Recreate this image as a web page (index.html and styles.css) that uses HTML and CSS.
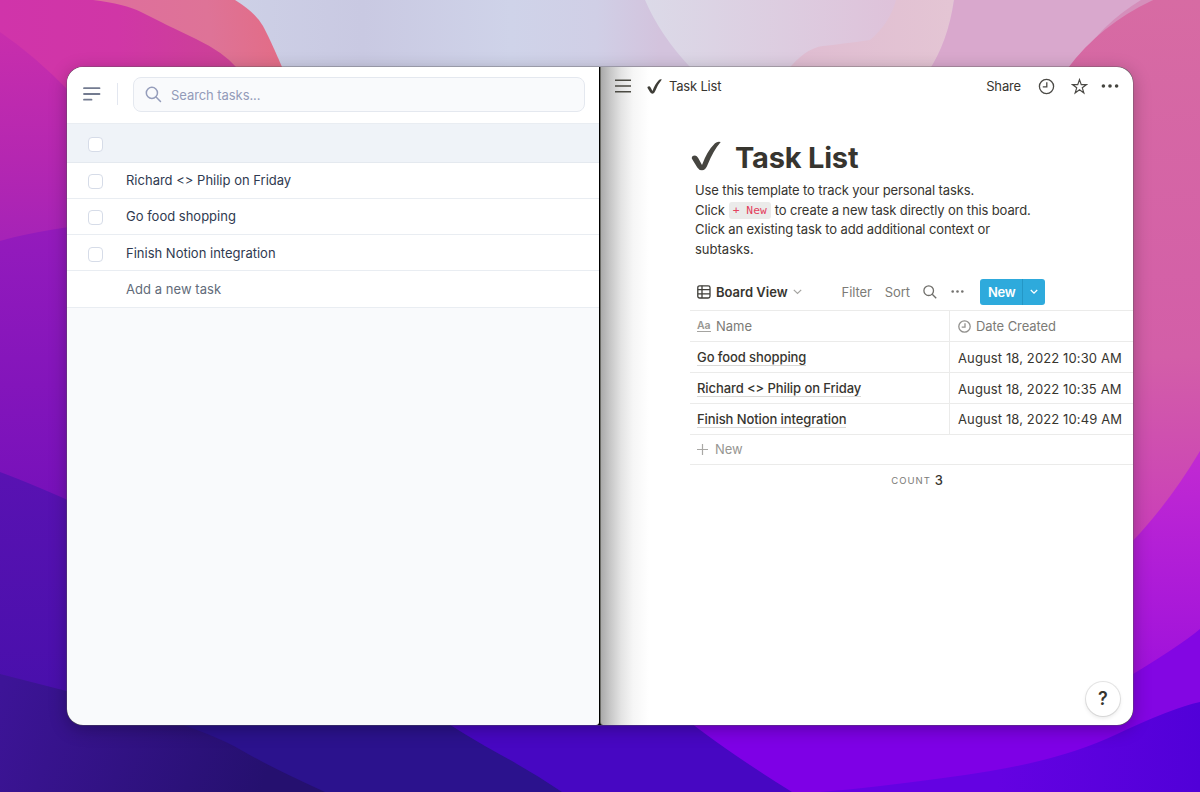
FILE: index.html
```
<!DOCTYPE html>
<html lang="en">
<head>
<meta charset="utf-8">
<title>Task List</title>
<link rel="stylesheet" href="styles.css">
</head>
<body>
<svg class="wallpaper" viewBox="0 0 1200 792" preserveAspectRatio="none" aria-hidden="true">
  <defs>
    <linearGradient id="gMagenta" x1="0" y1="0" x2="0" y2="1"><stop offset="0" stop-color="#c82eac"/><stop offset=".55" stop-color="#b527b1"/><stop offset="1" stop-color="#a222b8"/></linearGradient>
    <linearGradient id="gPink" x1="0" y1="0" x2="1" y2="0"><stop offset="0" stop-color="#d034aa"/><stop offset=".5" stop-color="#d036a6"/><stop offset="1" stop-color="#cb4295"/></linearGradient>
    <linearGradient id="gCoral" gradientUnits="userSpaceOnUse" x1="120" y1="40" x2="270" y2="20"><stop offset="0" stop-color="#de6f9c"/><stop offset=".6" stop-color="#de7397"/><stop offset="1" stop-color="#e26d88"/></linearGradient>
    <linearGradient id="gViolet" x1="0" y1="0" x2="0" y2="1"><stop offset="0" stop-color="#951bbc"/><stop offset="1" stop-color="#7410ba"/></linearGradient>
    <linearGradient id="gIndigo" x1="0" y1="0" x2="0" y2="1"><stop offset="0" stop-color="#5912b2"/><stop offset="1" stop-color="#470fab"/></linearGradient>
    <linearGradient id="gNavy" gradientUnits="userSpaceOnUse" x1="0" y1="690" x2="260" y2="792"><stop offset="0" stop-color="#3d1497"/><stop offset="1" stop-color="#25106f"/></linearGradient>
    <linearGradient id="gSky" gradientUnits="userSpaceOnUse" x1="235" y1="0" x2="660" y2="0"><stop offset="0" stop-color="#cdd0e6"/><stop offset=".3" stop-color="#c9c9e2"/><stop offset=".65" stop-color="#cfd3e9"/><stop offset=".85" stop-color="#d0cfe6"/><stop offset="1" stop-color="#d3c3dd"/></linearGradient>
    <linearGradient id="gHaze" gradientUnits="userSpaceOnUse" x1="640" y1="0" x2="930" y2="0"><stop offset="0" stop-color="#dbdae8"/><stop offset="1" stop-color="#dfbfd8"/></linearGradient>
    <linearGradient id="gRose" gradientUnits="userSpaceOnUse" x1="790" y1="0" x2="952" y2="0"><stop offset="0" stop-color="#dfbcd1"/><stop offset="1" stop-color="#e4c5d4"/></linearGradient>
    <linearGradient id="gRight" gradientUnits="userSpaceOnUse" x1="1150" y1="0" x2="1160" y2="550"><stop offset="0" stop-color="#d76ba3"/><stop offset=".65" stop-color="#d35ea8"/><stop offset="1" stop-color="#c93cba"/></linearGradient>
    <linearGradient id="gOrchid" x1="0" y1="0" x2="0" y2="1"><stop offset="0" stop-color="#c22ad2"/><stop offset="1" stop-color="#9d10dc"/></linearGradient>
    <linearGradient id="gBlue" gradientUnits="userSpaceOnUse" x1="1000" y1="760" x2="1200" y2="780"><stop offset="0" stop-color="#6402e2"/><stop offset="1" stop-color="#5100d8"/></linearGradient>
  </defs>
  <rect width="1200" height="792" fill="url(#gSky)"/>
  <path fill="url(#gCoral)" d="M0 0H235Q256 13 263 26T282 67V90H0Z"/>
  <path fill="url(#gPink)" d="M0 0H93Q125 4 141 12T163 23T196 39T236 67V260H0Z"/>
  <path fill="url(#gMagenta)" d="M0 32Q35 56 70 92V260H0Z"/>
  <path fill="url(#gViolet)" d="M0 241Q30 232 90 224V520H0Z"/>
  <path fill="url(#gIndigo)" d="M0 472Q35 485 90 510V720H0Z"/>
  <path fill="url(#gNavy)" d="M0 674L90 697V710H400V792H0Z"/>
  <path fill="#2b128d" d="M150 714Q214 734 241 750T325 792H620V710Z"/>
  <path fill="#4707c2" d="M430 712Q468 737 501 755T562 792H820V710Z"/>
  <path fill="#7e00e6" d="M675 710Q715 744 792 792H1200V640H1080V710Z"/>
  <path fill="url(#gHaze)" d="M645 0Q660 35 690 67V90H952V0Z"/>
  <path fill="url(#gRose)" d="M786 72Q805 48 823 46T870 40Q890 23 896 0H954Q948 42 928 72Z"/>
  <path fill="#d9a8cd" d="M954 0Q948 42 928 72H1080L1160 0Z"/>
  <path fill="#d58fbb" d="M1141 0H1153L1080 60Q1100 25 1141 0Z"/>
  <path fill="url(#gRight)" d="M1153 0Q1100 25 1068 68V90H1120V570L1200 500V0Z"/>
  <path fill="url(#gOrchid)" d="M1200 451Q1165 510 1120 554V690H1200Z"/>
  <path fill="#8306e3" d="M1200 629Q1180 646 1120 682V720H1200Z"/>
  <path fill="url(#gBlue)" d="M1200 702Q1172 708 1115 735T965 775T820 792H1200Z"/>
</svg>

<main class="window">
  <section class="tasks">
    <header class="tasks-head">
      <svg class="menu-icon" width="18" height="14" viewBox="0 0 18 14" fill="none" stroke="#737b90" stroke-width="1.8" stroke-linecap="round"><path d="M1 1.2h15.500M1 7h15.500M1 12.700h7.500"/></svg>
      <span class="rule"></span>
      <div class="search">
        <svg width="17" height="17" viewBox="0 0 18 18" fill="none" stroke="#959dbb" stroke-width="1.6" stroke-linecap="round"><circle cx="7.300" cy="7.300" r="5.900"/><path d="M11.700 11.700l4.700 4.700"/></svg>
        <span>Search tasks...</span>
      </div>
    </header>
    <div class="select-all"><i class="box"></i></div>
    <div class="task"><i class="box"></i><span>Richard &lt;&gt; Philip on Friday</span></div>
    <div class="task"><i class="box"></i><span>Go food shopping</span></div>
    <div class="task"><i class="box"></i><span>Finish Notion integration</span></div>
    <div class="task add"><span>Add a new task</span></div>
  </section>

  <section class="doc">
    <header class="topbar">
      <svg width="16" height="14" viewBox="0 0 16 14" stroke="#4b4a43" stroke-width="1.500"><path d="M0 1.200h16M0 7h16M0 12.800h16"/></svg>
      <svg class="mini-check" width="15" height="15" viewBox="0 0 30 30" fill="#3e3d37"><path d="M.8 17.500Q.5 14.500 4 14.500Q6 14.600 7.200 17L11 24Q16 10 24 2.200Q26.500 0 29.700 1Q22 10 16.500 24Q14.500 29.300 11 29.300Q8 29.300 6.300 26.500Q3.500 22 .8 17.500Z"/></svg>
      <span class="crumb">Task List</span>
      <span class="share">Share</span>
      <svg class="clock" width="17" height="17" viewBox="0 0 17 17" fill="none" stroke="#4b4a46" stroke-width="1.300"><circle cx="8.500" cy="8.500" r="7.100"/><path d="M8.800 4.300v4.500H4.800"/></svg>
      <svg class="star" width="17" height="17" viewBox="0 0 17 17" fill="none" stroke="#4b4a46" stroke-width="1.200" stroke-linejoin="miter"><path d="M8.500 1.600l1.750 5h5.200l-4.150 3.200 1.550 5.200-4.350-3.150-4.350 3.150 1.550-5.200L1.550 6.600h5.200z"/></svg>
      <svg class="dots" width="18" height="4" viewBox="0 0 18 4" fill="#45443f"><circle cx="2.400" cy="2" r="1.800"/><circle cx="9" cy="2" r="1.800"/><circle cx="15.600" cy="2" r="1.800"/></svg>
    </header>

    <div class="page">
      <h1><svg width="30" height="30" viewBox="0 0 30 30" fill="#464540"><path d="M.8 17.500Q.5 14.500 4 14.500Q6 14.600 7.200 17L11 24Q16 10 24 2.200Q26.500 0 29.700 1Q22 10 16.500 24Q14.500 29.300 11 29.300Q8 29.300 6.300 26.500Q3.500 22 .8 17.500Z"/></svg><span>Task List</span></h1>
      <div class="intro">
        <div><span>Use this template to track your personal tasks.</span></div>
        <div><span>Click</span><code>+ New</code><span>to create a new task directly on this board.</span></div>
        <div><span>Click an existing task to add additional context or</span></div>
        <div><span>subtasks.</span></div>
      </div>

      <div class="toolbar">
        <svg width="14" height="14" viewBox="0 0 14 14" fill="none" stroke="#3f3e39" stroke-width="1.300"><rect x=".8" y=".8" width="12.200" height="12.200" rx="1.800"/><path d="M.8 4.700h12.200M.8 8.900h12.200M5 .8v12.200"/></svg>
        <span class="view">Board View</span>
        <svg class="chev" width="9" height="6" viewBox="0 0 9 6" fill="none" stroke="#a5a4a1" stroke-width="1.200"><path d="M.8.800l3.700 3.700L8.200.800"/></svg>
        <span class="filter">Filter</span>
        <span class="sort">Sort</span>
        <svg class="find" width="14" height="14" viewBox="0 0 14 14" fill="none" stroke="#6f6e6a" stroke-width="1.300"><circle cx="5.700" cy="5.700" r="4.800"/><path d="M9.200 9.200l4 4"/></svg>
        <svg class="more" width="13" height="3" viewBox="0 0 13 3" fill="#73726f"><circle cx="1.700" cy="1.500" r="1.300"/><circle cx="6.500" cy="1.500" r="1.300"/><circle cx="11.300" cy="1.500" r="1.300"/></svg>
        <div class="new"><span>New</span><b><svg width="8" height="6" viewBox="0 0 8 6" fill="none" stroke="#fff" stroke-width="1.300"><path d="M.8 1l3.200 3.200L7.200 1"/></svg></b></div>
      </div>

      <div class="table">
        <div class="row head">
          <div class="cell"><span class="aa">Aa</span><span class="name-label">Name</span></div>
          <div class="cell"><svg width="13" height="13" viewBox="0 0 13 13" fill="none" stroke="#92918e" stroke-width="1.300"><circle cx="6.500" cy="6.500" r="5.700"/><path d="M7 3.200v3.900H3.700"/></svg><span class="date-label">Date Created</span></div>
        </div>
        <div class="row"><div class="cell"><span class="name">Go food shopping</span></div><div class="cell"><span class="date">August 18, 2022 10:30 AM</span></div></div>
        <div class="row"><div class="cell"><span class="name">Richard &lt;&gt; Philip on Friday</span></div><div class="cell"><span class="date">August 18, 2022 10:35 AM</span></div></div>
        <div class="row"><div class="cell"><span class="name">Finish Notion integration</span></div><div class="cell"><span class="date">August 18, 2022 10:49 AM</span></div></div>
        <div class="row last"><svg width="11" height="11" viewBox="0 0 11 11" stroke="#a9a8a5" stroke-width="1.200"><path d="M5.500 0v11M0 5.500h11"/></svg><span>New</span></div>
      </div>
      <div class="count"><span>COUNT</span><em>3</em></div>
    </div>
    <div class="help">?</div>
  </section>
</main>
</body>
</html>
```

FILE: styles.css
```
* { box-sizing: border-box; }
body {
  margin: 0;
  width: 1200px;
  height: 792px;
  overflow: hidden;
  padding: 67px;
  font-family: Inter, "Liberation Sans", sans-serif;
  font-size: 13px;
  color: #37352f;
}
svg { display: block; flex: none; }
span { white-space: nowrap; }

.wallpaper { position: absolute; inset: 0; width: 1200px; height: 792px; z-index: -1; }

.window {
  display: flex;
  width: 1066px;
  height: 658px;
  border-radius: 16px;
  background: #000;
  box-shadow: 0 0 0 .5px rgba(90, 90, 90, .7), 0 4px 18px rgba(0, 0, 0, .28);
}

/* Task app */
.tasks {
  width: 532px;
  background: #f9fafc;
  border-radius: 16px 0 3px 16px;
  overflow: hidden;
  color: #2f3a50;
}
.tasks-head { display: flex; align-items: center; height: 57px; padding: 0 14px 2px 16px; background: #fff; border-bottom: 1px solid #e9edf2; }
.rule { width: 1px; height: 22px; margin: 0 15px 0 16px; background: #e3e7f0; }
.search {
  display: flex; align-items: center; gap: 9px; flex: 1; height: 35px; padding-left: 11px;
  background: #f9fafc; border: 1px solid #e4e8ef; border-radius: 8px; color: #939bb9;
}
.search span { padding-top: 1px; letter-spacing: -.07px; }
.select-all { display: flex; align-items: center; height: 38.500px; padding: 3px 21px 0; background: #eff3f8; border-bottom: 1px solid #e4e9ef; }
.box { display: block; flex: none; width: 15px; height: 15px; border: 1px solid #d6dce8; border-radius: 4px; background: #fff; }
.task { display: flex; align-items: center; height: 36.300px; padding: 0 21px; gap: 23px; background: #fff; border-bottom: 1px solid #e9edf2; }
.task .box { margin-top: 3px; }
.add { padding-left: 59px; color: #626b7a; letter-spacing: .05px; }

/* Document */
.doc {
  display: flex; flex-direction: column; position: relative; width: 533px; margin-left: 1px;
  border-radius: 0 16px 16px 3px; border-left: 1px solid #6b6b66;
  background: linear-gradient(90deg, #aaaaaa 0, #c9c9c9 10px, #e3e3e3 20px, #f6f6f6 32px, #fff 48px);
}
.topbar { display: flex; align-items: center; height: 38px; padding: 0 14px; }
.mini-check { margin-left: 16px; }
.crumb { margin-left: 7px; letter-spacing: -.2px; }
.share { margin-left: auto; letter-spacing: -.15px; }
.clock { margin-left: 17px; }
.star { margin-left: 16px; }
.dots { margin-left: 13px; }
.page { padding-left: 89px; }
h1 { display: flex; align-items: center; gap: 14px; height: 34px; margin: 35px 0 0 1px; font-size: 29px; font-weight: 700; letter-spacing: -.2px; }
h1 svg { margin-top: -2px; }
.intro { padding: 7px 0 0 5px; line-height: 19.600px; letter-spacing: -.12px; }
.intro div { display: flex; height: 19.600px; }
.intro div:nth-child(4) { letter-spacing: 0; }
code { margin: 1px 4px 0 4px; padding: 0 4px; height: 17px; font: 11.300px/18px "DejaVu Sans Mono", monospace; letter-spacing: 0; color: #e4415e; background: #ebebea; border-radius: 3px; }
.toolbar { display: flex; align-items: center; height: 27px; margin-top: 19px; padding-left: 7px; color: #7c7b77; }
.view { margin-left: 5px; font-weight: 600; color: #37352f; }
.chev { margin-left: 5px; }
.filter { margin-left: 40px; letter-spacing: -.1px; }
.sort { margin-left: 13px; letter-spacing: -.1px; }
.find { margin-left: 13px; }
.more { margin-left: 14px; }
.new { display: flex; height: 26px; margin-left: 16px; background: #2eaadc; border-radius: 3px; color: #fff; font-weight: 600; line-height: 26px; }
.new span { padding-left: 8px; width: 42px; letter-spacing: -.2px; }
.new b { display: flex; align-items: center; justify-content: center; width: 23px; border-left: 1px solid #2497c6; }
.table { margin-top: 5px; border-top: 1px solid #ebebea; }
.row { display: flex; height: 30.800px; border-bottom: 1px solid #ebebea; }
.cell { display: flex; align-items: center; width: 260px; padding-left: 7px; border-right: 1px solid #ebebea; }
.cell + .cell { flex: 1; border-right: 0; padding-left: 8px; }
.head { color: #7c7b77; height: 31px; }
.aa { width: 14px; margin-right: 5px; font-size: 10.500px; font-weight: 600; line-height: 11px; border-bottom: 1px solid #a5a4a1; color: #979692; letter-spacing: -.2px; }
.date-label { margin-left: 5px; letter-spacing: -.08px; }
.name { margin-top: 2px; font-weight: 500; line-height: 15px; border-bottom: 1px solid #d9d9d7; letter-spacing: -.09px; }
.date { padding-top: 1px; letter-spacing: .12px; }
.last { align-items: center; padding-left: 7px; gap: 7px; height: 30px; color: #979692; letter-spacing: -.1px; }
.count { display: flex; align-items: center; justify-content: flex-end; width: 253px; height: 31px; gap: 4px; }
.count span { font-size: 9.500px; letter-spacing: 1px; color: #7c7b77; }
.count em { font-style: normal; font-weight: 500; }
.help {
  position: absolute; right: 13px; bottom: 9px; width: 34px; height: 34px; border-radius: 50%;
  background: #fff; box-shadow: 0 0 0 1px rgba(15, 15, 15, .1), 0 2px 4px rgba(15, 15, 15, .1);
  font-size: 18px; font-weight: 600; line-height: 34px; text-align: center;
}
```
